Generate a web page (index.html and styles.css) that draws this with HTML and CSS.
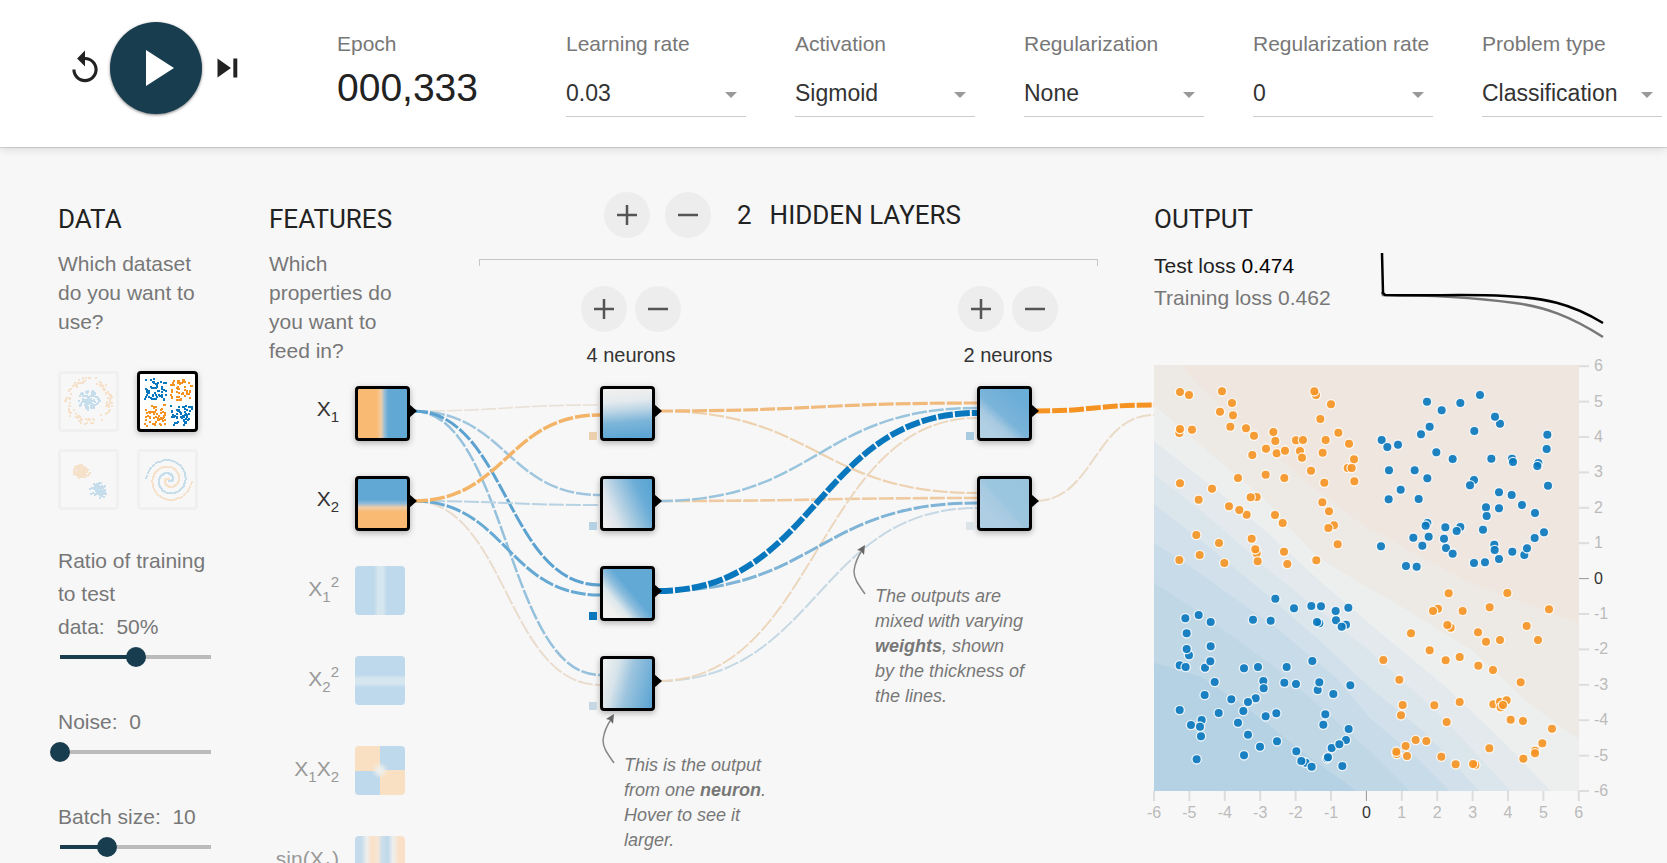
FILE: index.html
```html
<!DOCTYPE html>
<html lang="en">
<head>
<meta charset="utf-8">
<title>Neural Network Playground</title>
<link rel="stylesheet" href="styles.css">
</head>
<body>
<header class="topbar">
  <div class="controls">
    <button class="icon-button" aria-label="Reset"><svg viewBox="0 0 24 24"><path d="M12 5V1L7 6l5 5V7c3.31 0 6 2.69 6 6s-2.69 6-6 6-6-2.69-6-6H4c0 4.42 3.58 8 8 8s8-3.58 8-8-3.58-8-8-8z"/></svg></button>
    <button class="play-button" aria-label="Run"><svg viewBox="0 0 28 36"><path d="M0 0l28 18L0 36z"/></svg></button>
    <button class="icon-button" aria-label="Step"><svg viewBox="0 0 24 24"><path d="M6 18l8.500-6L6 6v12zM16 6v12h2.500V6h-2.500z"/></svg></button>
  </div>
  <div class="settings">
    <div class="setting"><span class="setting-label">Epoch</span><span class="epoch">000,333</span></div>
    <div class="setting"><label class="setting-label" for="rate">Learning rate</label><div class="select"><select id="rate"><option>0.03</option></select></div></div>
    <div class="setting"><label class="setting-label" for="activation">Activation</label><div class="select"><select id="activation"><option>Sigmoid</option></select></div></div>
    <div class="setting"><label class="setting-label" for="regularization">Regularization</label><div class="select"><select id="regularization"><option>None</option></select></div></div>
    <div class="setting"><label class="setting-label" for="regrate">Regularization rate</label><div class="select"><select id="regrate"><option>0</option></select></div></div>
    <div class="setting"><label class="setting-label" for="problem">Problem type</label><div class="select"><select id="problem"><option>Classification</option></select></div></div>
  </div>
</header>

<main class="main">
  <svg class="links" id="links" aria-hidden="true"></svg>

  <section class="column data">
    <h2>DATA</h2>
    <p class="hint">Which dataset do you want to use?</p>
    <div class="datasets">
      <button class="dataset" aria-label="Circle"><svg viewBox="0 0 55 55" id="set-circle"></svg></button>
      <button class="dataset selected" aria-label="Exclusive or"><svg viewBox="0 0 55 55" id="set-xor"></svg></button>
      <button class="dataset" aria-label="Gaussian"><svg viewBox="0 0 55 55" id="set-gauss"></svg></button>
      <button class="dataset" aria-label="Spiral"><svg viewBox="0 0 55 55" id="set-spiral"></svg></button>
    </div>
    <div class="slider"><label for="ratio">Ratio of training<br>to test<br>data:&nbsp; 50%</label><input type="range" id="ratio" min="10" max="90" value="50" style="--fill:50%"></div>
    <div class="slider"><label for="noise">Noise:&nbsp; 0</label><input type="range" id="noise" min="0" max="50" value="0" style="--fill:0%"></div>
    <div class="slider"><label for="batch">Batch size:&nbsp; 10</label><input type="range" id="batch" min="1" max="30" value="10" style="--fill:31%"></div>
  </section>

  <section class="column features">
    <h2>FEATURES</h2>
    <p class="hint">Which properties do you want to feed in?</p>
    <div class="nodes">
      <div class="feature active"><span class="feature-name">X<sub>1</sub></span><div class="node map-x1" id="x1"></div></div>
      <div class="feature active"><span class="feature-name">X<sub>2</sub></span><div class="node map-x2" id="x2"></div></div>
      <div class="feature"><span class="feature-name">X<sub>1</sub><sup>2</sup></span><div class="swatch map-x1sq"></div></div>
      <div class="feature"><span class="feature-name">X<sub>2</sub><sup>2</sup></span><div class="swatch map-x2sq"></div></div>
      <div class="feature"><span class="feature-name">X<sub>1</sub>X<sub>2</sub></span><div class="swatch map-x1x2"></div></div>
      <div class="feature"><span class="feature-name">sin(X<sub>1</sub>)</span><div class="swatch map-sin"></div></div>
    </div>
  </section>

  <section class="network">
    <div class="network-head">
      <button class="round" aria-label="Add layer"><svg viewBox="0 0 20 20"><path d="M0 10H20M10 0V20"/></svg></button>
      <button class="round" aria-label="Remove layer"><svg viewBox="0 0 20 20"><path d="M0 10H20"/></svg></button>
      <h2><span class="layer-count">2</span>HIDDEN LAYERS</h2>
    </div>
    <div class="bracket"></div>
    <div class="layers">
      <div class="layer">
        <div class="layer-buttons">
          <button class="round" aria-label="Add neuron"><svg viewBox="0 0 20 20"><path d="M0 10H20M10 0V20"/></svg></button>
          <button class="round" aria-label="Remove neuron"><svg viewBox="0 0 20 20"><path d="M0 10H20"/></svg></button>
        </div>
        <div class="neuron-count">4 neurons</div>
        <div class="nodes">
          <div class="node map-a1" id="a1"><i class="bias bias-a1"></i></div>
          <div class="node map-a2" id="a2"><i class="bias bias-a2"></i></div>
          <div class="node map-a3" id="a3"><i class="bias bias-a3"></i></div>
          <div class="node map-a4" id="a4"><i class="bias bias-a4"></i></div>
        </div>
        <div class="callout callout-neuron">
          <svg viewBox="0 0 16 54"><path class="stem" d="M14 50C7 40 3 35 3 27C4 18 7 12 12 5"/><path class="tip" d="M14 1L6 6L10 7L13 11Z"/></svg>
          <p>This is the output<br>from one <b>neuron</b>.<br>Hover to see it<br>larger.</p>
        </div>
      </div>
      <div class="layer">
        <div class="layer-buttons">
          <button class="round" aria-label="Add neuron"><svg viewBox="0 0 20 20"><path d="M0 10H20M10 0V20"/></svg></button>
          <button class="round" aria-label="Remove neuron"><svg viewBox="0 0 20 20"><path d="M0 10H20"/></svg></button>
        </div>
        <div class="neuron-count">2 neurons</div>
        <div class="nodes">
          <div class="node map-b1" id="b1"><i class="bias bias-b1"></i></div>
          <div class="node map-b2" id="b2"><i class="bias bias-b2"></i></div>
        </div>
        <div class="callout callout-weights">
          <svg viewBox="0 0 16 54"><path class="stem" d="M14 50C7 40 3 35 3 27C4 18 7 12 12 5"/><path class="tip" d="M14 1L6 6L10 7L13 11Z"/></svg>
          <p>The outputs are<br>mixed with varying<br><b>weights</b>, shown<br>by the thickness of<br>the lines.</p>
        </div>
      </div>
    </div>
  </section>

  <section class="column output">
    <h2>OUTPUT</h2>
    <div class="loss">
      <div class="loss-text"><div class="test">Test loss <b>0.474</b></div><div class="train">Training loss 0.462</div></div>
      <svg class="loss-chart" viewBox="0 0 224 90">
        <path class="train-line" d="M2 42L3 45C60 45 105 49 135 53C165 57 190 66 223 87"/>
        <path class="test-line" d="M2 3L3 43L5 45C50 46 90 44 125 46C165 48 190 53 223 73"/>
      </svg>
    </div>
    <svg class="plot" id="plot" viewBox="0 0 470 460"></svg>
  </section>
</main>
<script src="playground.js"></script>
</body>
</html>
```
FILE: styles.css
```css
* { box-sizing: border-box; }
body {
  margin: 0;
  height: 100vh;
  overflow: hidden;
  background: #f7f7f7;
  color: #222;
  font: 21px/29px "Liberation Sans", Arial, sans-serif;
}
button { border: 0; padding: 0; background: none; cursor: pointer; }
h2 { margin: 0 0 14px; font: 400 26px/32px Roboto, sans-serif; }

.topbar {
  position: relative;
  display: flex;
  min-height: 147px;
  padding: 22px 5px 0 66px;
  background: #fff;
  box-shadow: 0 1px 1px rgba(0, 0, 0, .12), 0 2px 10px rgba(0, 0, 0, .12);
}
.controls { display: flex; align-items: center; gap: 6px; width: 271px; height: 91px; flex: none; }
.icon-button { width: 38px; height: 38px; }
.icon-button svg { display: block; width: 38px; height: 38px; fill: #222; }
.play-button {
  display: flex;
  align-items: center;
  justify-content: center;
  width: 92px;
  height: 92px;
  padding-left: 8px;
  border-radius: 50%;
  background: #183d4e;
  box-shadow: 0 1px 3px rgba(0, 0, 0, .5);
}
.play-button svg { width: 28px; height: 36px; fill: #fff; }
.settings { display: grid; grid-template-columns: repeat(6, 1fr); gap: 49px; flex: 1; padding-top: 10px; }
.setting { min-width: 0; white-space: nowrap; }
.setting-label { display: block; color: #777; line-height: 24px; }
.epoch { display: block; margin-top: 10px; font-size: 39px; line-height: 44px; }
.select { position: relative; margin-top: 21px; }
.select::after {
  content: "";
  position: absolute;
  right: 9px;
  top: 15px;
  border: 6px solid transparent;
  border-top-color: #999;
  border-bottom: 0;
}
select {
  width: 100%;
  height: 40px;
  padding: 0 0 8px;
  border: 0;
  border-bottom: 1px solid #ccc;
  border-radius: 0;
  background: none;
  appearance: none;
  color: #333;
  font: 23px "Liberation Sans", Arial, sans-serif;
}

.main {
  position: relative;
  display: grid;
  grid-template-columns: 153px 200px 1fr 470px;
  padding: 0 43px 0 58px;
}
.column { padding-top: 56px; }
.features { margin-left: 58px; width: 148px; }
.links { position: absolute; left: 0; top: 0; width: 100%; height: 100%; overflow: visible; fill: none; }
.links path { stroke-dasharray: 15 2; }
.hint { margin: 0; color: #777; }

.datasets { display: grid; grid-template-columns: 61px 61px; gap: 17px 18px; margin: 35px 0 34px; }
.dataset { height: 61px; border: 3px solid #f0f0f0; border-radius: 4px; }
.dataset svg { display: block; width: 55px; height: 55px; opacity: .2; }
.dataset.selected { border-color: #000; background: #fff; box-shadow: 0 2px 6px rgba(0, 0, 0, .25); }
.dataset.selected svg { opacity: 1; }

.slider { margin-bottom: 38px; color: #777; line-height: 33px; }
.slider label { display: block; margin-bottom: 4px; }
.slider input {
  display: block;
  width: calc(100% + 18px);
  height: 20px;
  margin: 0 0 0 -8px;
  background: none;
  appearance: none;
}
.slider input::-webkit-slider-runnable-track {
  height: 4px;
  background: linear-gradient(to right, #183d4e var(--fill), #bbb var(--fill)) center / calc(100% - 20px) 4px no-repeat;
}
.slider input::-webkit-slider-thumb {
  appearance: none;
  width: 20px;
  height: 20px;
  margin-top: -8px;
  border-radius: 50%;
  background: #183d4e;
}

.nodes { display: flex; flex-direction: column; gap: 35px; margin-top: 21px; }
.feature { display: flex; height: 55px; justify-content: flex-end; gap: 16px; white-space: nowrap; }
.feature-name { color: #999; line-height: 46px; }
.active .feature-name { color: #333; }
.feature-name sub, .feature-name sup { font-size: 15px; line-height: 0; }
.feature-name sub { vertical-align: -6px; }
.feature-name sup { vertical-align: 9px; }
.node {
  position: relative;
  width: 55px;
  height: 55px;
  margin-right: 7px;
  border: 3px solid #000;
  border-radius: 4px;
  background-origin: border-box;
  box-shadow: 0 2px 6px rgba(0, 0, 0, .3);
}
.node::after {
  content: "";
  position: absolute;
  left: 51px;
  top: 15px;
  border: 7px solid transparent;
  border-left: 8px solid #000;
  border-right: 0;
}
.swatch { width: 50px; height: 49px; margin-right: 12px; border-radius: 4px; }
.bias { position: absolute; left: -14px; top: 43px; width: 8px; height: 8px; }

.map-x1 { background: linear-gradient(to right, #f9ba74 38%, #f0cda6 47%, #8fbbd8 55%, #62a8d5 62%); }
.map-x2 { background: linear-gradient(#62a8d5 42%, #8fbbd8 50%, #f0cda6 58%, #f9ba74 67%); }
.map-x1sq { background: linear-gradient(to right, #bfd9ec 38%, #d6e6ee 46%, #d6e6ee 56%, #bfd9ec 64%); }
.map-x2sq { background: linear-gradient(#bfd9ec 38%, #d6e6ee 46%, #d6e6ee 56%, #bfd9ec 64%); }
.map-x1x2 {
  background:
    radial-gradient(circle at 50% 50%, #eeeeec 5%, rgba(238, 238, 236, 0) 24%),
    conic-gradient(#bfd9ec 25%, #fae0c2 25% 50%, #bfd9ec 50% 75%, #fae0c2 75%);
}
.map-sin { background: linear-gradient(to right, #c3dbea 12%, #efefee 24%, #fae0c6 34%, #f6e6d5 46%, #cbdfeb 54%, #bfd9ea 66%, #efefee 76%, #fae0c6 88%); }
.map-a1 { background: linear-gradient(175deg, #f0f0ee 4%, #e4eaee 26%, #bcd5e5 44%, #7db5d9 66%, #5ea6d4 94%); }
.map-a2 { background: linear-gradient(66deg, #f0eff0 6%, #dde5ec 24%, #9fc6df 50%, #6aadd7 74%, #5aa4d3 96%); }
.map-a3 { background: linear-gradient(50deg, #f2f1ef 16%, #dfe8ec 29%, #8dbddc 44%, #62a9d6 56%); }
.map-a4 { background: linear-gradient(105deg, #eceff0 6%, #d6e3ea 28%, #9cc4de 52%, #5ea6d4 96%); }
.map-b1 { background: linear-gradient(42deg, #b2d0e4 18%, #a6c9e1 32%, #7bb4d9 46%, #6aadd7 84%); }
.map-b2 { background: linear-gradient(48deg, #afcee3 20%, #a6cae1 44%, #9cc6df 50%, #9ac5df 86%); }
.bias-a1 { background: #ecd0ae; }
.bias-a2 { background: #b6d2e2; }
.bias-a3 { background: #0877bd; }
.bias-a4 { background: #c6d9e3; }
.bias-b1 { background: #a9cbe0; }
.bias-b2 { background: #dde4e7; }

.network { padding-top: 45px; }
.network-head { display: flex; align-items: center; justify-content: center; gap: 15px; height: 46px; }
.network-head h2 { margin: 0 0 0 11px; }
.layer-count { margin-right: 18px; }
.round { width: 46px; height: 46px; border-radius: 50%; background: #ededed; }
.round svg { display: block; width: 20px; height: 20px; margin: auto; stroke: #555; stroke-width: 2.5; }
.bracket { height: 7px; margin: 21px 56px 20px 68px; border: 1px solid #c6c6c6; border-bottom: 0; }
.layers { display: flex; align-items: flex-start; justify-content: space-between; margin: 0 96px 0 170px; }
.layer { position: relative; width: 100px; }
.layer-buttons { display: flex; gap: 8px; }
.neuron-count { margin-top: 11px; color: #333; font-size: 20px; line-height: 24px; text-align: center; }
.layer .nodes { align-items: center; margin-top: 19px; }
.callout { position: absolute; display: flex; color: #777; font-size: 18px; font-style: italic; line-height: 25px; white-space: nowrap; }
.callout p { margin: 0; }
.callout svg { flex: none; width: 16px; height: 54px; }
.callout-neuron { left: 19px; top: 427px; }
.callout-neuron p { margin: 40px 0 0 8px; }
.callout-weights { left: -107px; top: 258px; }
.callout-weights p { margin: 40px 0 0 8px; }
.stem { fill: none; stroke: #888; stroke-width: 1.5; }
.tip { fill: #666; }

.output { padding-right: 20px; margin-right: -20px; }
.loss { display: flex; height: 90px; margin: 15px 0 25px; line-height: 32px; white-space: nowrap; }
.loss-text { width: 226px; }
.test b { color: #000; font-weight: 400; }
.train { color: #777; }
.loss-chart { width: 224px; height: 90px; fill: none; stroke-width: 2.5; }
.test-line { stroke: #000; }
.train-line { stroke: #777; }
.plot { display: block; width: 100%; overflow: visible; }
.plot text { fill: #bbb; font-size: 16px; }
.plot .zero { fill: #333; }
.tick { stroke: #ddd; stroke-width: 2; }
.tick-zero { stroke: #999; stroke-width: 1; }
.dot { stroke: #fff; stroke-width: 4; fill-opacity: .9; stroke-opacity: .85; }
```
FILE: playground.js
```javascript
const NS = "http://www.w3.org/2000/svg";
const ORANGE = "#f59322";
const BLUE = "#0877bd";

function add(parent, name, attrs, text) {
  const el = document.createElementNS(NS, name);
  for (const key in attrs) el.setAttribute(key, attrs[key]);
  if (text !== undefined) el.textContent = text;
  parent.appendChild(el);
  return el;
}

/* Links: source, target, entry height on the target, colour, width. */
const links = [
  ["x1", "a1", 19, "#e9e1d7", 1.6], ["x1", "a2", 19, "#9fc6de", 2.5],
  ["x1", "a4", 19, "#95c1dc", 2.5], ["x1", "a3", 19, "#5ca2d0", 3],
  ["x2", "a4", 29, "#eadccd", 2], ["x2", "a2", 29, "#b7d2e2", 2],
  ["x2", "a3", 29, "#66a9d3", 3], ["x2", "a1", 29, "#f3b468", 3.5],
  ["a1", "b2", 17, "#eed2b0", 2.2], ["a1", "b1", 17, "#f1ba7d", 3.2],
  ["a2", "b2", 22, "#efcaa0", 2.6], ["a2", "b1", 22, "#99c4dd", 2.5],
  ["a4", "b2", 32, "#c5d8e4", 2], ["a4", "b1", 32, "#ecd7be", 2],
  ["a3", "b2", 27, "#7fb4d7", 3], ["a3", "b1", 27, "#0877bd", 6],
  ["b2", "plot", 50, "#ebdac6", 2], ["b1", "plot", 40, "#f59322", 5]
];
function drawLinks() {
  const svg = document.getElementById("links");
  svg.replaceChildren();
  const base = svg.getBoundingClientRect();
  for (const [from, to, entry, color, width] of links) {
    const a = document.getElementById(from).getBoundingClientRect();
    const b = document.getElementById(to).getBoundingClientRect();
    const x1 = a.right + 3 - base.left, y1 = a.top + 25 - base.top;
    const x2 = b.left - base.left, y2 = b.top + entry - base.top;
    const mid = (x1 + x2) / 2;
    add(svg, "path", { d: `M${x1} ${y1}C${mid} ${y1} ${mid} ${y2} ${x2} ${y2}`, stroke: color, "stroke-width": width });
  }
}

/* Output plot, in units of a third of a pixel: 1275 across. */
const bands = [
  ["#edeae5", "80,0 140,70 340,250 450,345 560,430 640,490 708,522 770,560 940,650 1100,710 1275,776"],
  ["#ecefee", "0,120 180,275 330,400 390,470 490,575 620,655 748,728 960,860 1120,1010 1275,1125"],
  ["#e3e9ed", "0,228 228,408 348,510 488,640 648,778 878,968 1048,1130 1190,1275"],
  ["#dae5ec", "0,328 150,445 350,620 500,740 648,860 848,1040 1070,1275"],
  ["#d1e0ea", "0,418 170,550 350,700 500,830 648,968 818,1108 975,1275"],
  ["#c8dbe8", "0,533 128,618 368,790 548,940 648,1060 780,1170 888,1275"],
  ["#c0d7e6", "0,653 110,725 230,810 360,905 490,1018 650,1160 768,1275"],
  ["#b5d1e4", "0,893 140,935 280,1030 350,1085 450,1165 608,1275"]
];
const points = [
  [ORANGE, -72, -72, "150,153 177,162 276,151 306,186 270,212 309,223 301,257 348,262 372,284 148,276 150,264 186,266 558,162 553,151 603,190 571,234 625,275 587,297 657,308 672,355 578,335 653,381 665,381 673,421 430,273 436,300 408,323 440,337 465,329 498,298 519,297 510,330 516,350 367,342 324,411 407,401 463,411 543,389 583,425 577,484 597,511 612,553 595,561 623,610 559,658 150,427 246,443 206,476 380,468 362,469 297,496 350,521 328,507 435,522 458,546 199,582 267,606 365,593 380,637 376,625 383,661 462,632 472,669 209,642 283,666 148,657"],
  [BLUE, 648, -72, "171,182 215,208 271,186 330,162 390,248 375,227 179,257 153,280 313,270 35,297 52,318 84,311 532,281 530,324 199,334 248,354 364,353 426,353 429,363 505,366 502,375 57,388 134,388 172,412 312,417 300,433 534,434 92,446 56,475 146,474 387,454 425,462 456,492 348,499 387,502 350,525 495,516 172,546 167,554 226,559 271,558 260,570 339,566 522,574 494,591 130,590 176,587 222,593 157,614 228,621 248,638 33,616 373,611 374,627 427,632 463,642 471,622 312,666 345,664 387,654 108,675 140,677"],
  [BLUE, -72, 648, "436,53 492,82 544,75 573,76 617,90 655,80 618,118 648,131 635,137 568,127 561,123 166,112 206,102 242,123 369,116 422,119 170,157 242,196 177,223 170,204 149,253 167,258 225,260 241,241 342,262 384,258 470,258 547,240 254,303 400,300 401,322 463,305 498,309 563,327 568,304 661,313 610,339 224,342 304,355 377,352 354,363 149,387 266,396 340,390 215,417 183,432 210,437 213,466 324,425 407,406 439,397 586,400 580,431 656,444 354,461 648,477 390,497 441,481 605,501 628,490 342,523 499,511 527,545 514,540 545,557 591,532 594,529 637,555 200,535"],
  [ORANGE, 648, 648, "236,37 412,36 204,83 189,90 278,90 359,79 537,85 242,140 232,132 123,157 324,154 348,182 390,177 470,135 504,177 179,208 40,237 227,238 269,228 325,254 369,267 88,296 452,304 98,372 193,373 269,363 370,370 390,362 410,358 392,379 399,372 93,403 230,423 422,416 459,420 546,443 137,477 169,480 107,495 80,519 79,512 111,525 358,502 517,487 495,509 495,517 460,533 214,527 257,550 316,552 309,549"]
];
function drawPlot() {
  const svg = document.getElementById("plot");
  const g = add(svg, "g", { transform: "scale(0.33333)" });
  add(g, "rect", { width: 1275, height: 1278, fill: "#efe6e0" });
  for (const [color, line] of bands) {
    const end = line.endsWith(",1275") ? " 0,1278" : " 1275,1278 0,1278";
    const start = line.startsWith("80,0") ? "0,0 " : "";
    add(g, "polygon", { points: start + line.replace(/,1275$/, ",1278") + end, fill: color });
  }
  for (const [color, dx, dy, list] of points) {
    for (const pair of list.split(" ")) {
      const [x, y] = pair.split(",").map(Number);
      add(g, "circle", { class: "dot", cx: x + dx, cy: y + dy, r: 14, fill: color });
    }
  }
  for (let i = -6; i <= 6; i++) {
    const p = (i + 6) * 35.4, q = 426 - p;
    const zero = i === 0;
    const tick = zero ? "tick-zero" : "tick";
    const text = zero ? "zero" : "";
    add(svg, "line", { class: tick, x1: p, x2: p, y1: 426, y2: 436 });
    add(svg, "text", { class: text, x: p, y: 453, "text-anchor": "middle" }, i);
    add(svg, "line", { class: tick, x1: 425, x2: 435, y1: q, y2: q });
    add(svg, "text", { class: text, x: 440, y: q + 5 }, i);
  }
}

/* Dataset thumbnails. */
let seed = 7;
function random() {
  seed = (seed * 16807) % 2147483647;
  return seed / 2147483647;
}
function gauss() {
  return (random() + random() + random() + random() - 2) * 1.7;
}
function mark(id, x, y, color) {
  add(document.getElementById(id), "rect", { x: Math.round(x) - 1, y: Math.round(y) - 1, width: 2, height: 2, fill: color });
}
function drawDatasets() {
  for (let i = 0; i < 110; i++) {
    const t = random() * 6.283, inner = random() * 11, outer = 18 + random() * 6;
    const u = random() * 6.283;
    mark("set-circle", 28 + inner * Math.cos(t), 27 + inner * Math.sin(t), BLUE);
    mark("set-circle", 28 + outer * Math.cos(u), 27 + outer * Math.sin(u), ORANGE);
    mark("set-gauss", 20 + gauss() * 3, 20 + gauss() * 3, ORANGE);
    mark("set-gauss", 38 + gauss() * 3, 38 + gauss() * 3, BLUE);
    const r = i / 110 * 23, a = (1 - i / 110) * 11;
    mark("set-spiral", 29 + r * Math.cos(a), 28 + r * Math.sin(a), ORANGE);
    mark("set-spiral", 29 - r * Math.cos(a), 28 - r * Math.sin(a), BLUE);
  }
  for (let i = 0; i < 220; i++) {
    const right = i % 2 === 1, low = i % 4 > 1;
    const x = (right ? 31 : 5) + random() * 21, y = (low ? 31 : 5) + random() * 21;
    mark("set-xor", x, y, right === low ? BLUE : ORANGE);
  }
}

drawPlot();
drawDatasets();
drawLinks();
window.addEventListener("resize", drawLinks);
```
